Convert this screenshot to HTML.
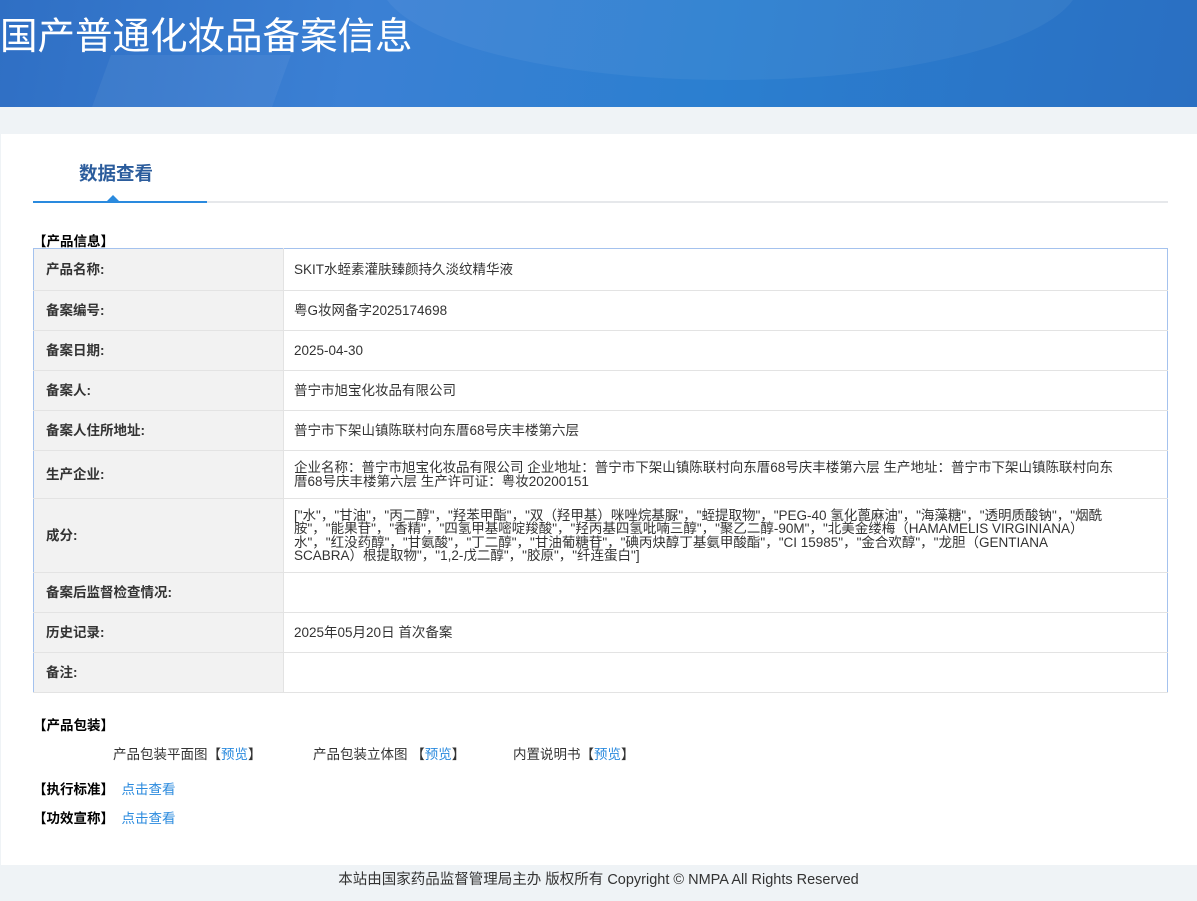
<!DOCTYPE html>
<html><head><meta charset="utf-8"><style>
*{margin:0;padding:0;box-sizing:border-box}
body{width:1197px;height:901px;background:#eff3f6;font-family:"Liberation Sans","Noto Sans CJK SC",sans-serif;color:#333;font-size:13.5px;overflow:hidden;position:relative}
.hd{position:absolute;left:0;top:0;width:1197px;height:107px;background:linear-gradient(100deg,#2f6fc4 0%,#3b80d4 30%,#2b7fd0 60%,#2a6fc2 100%);overflow:hidden}
.hd .c1{position:absolute;left:380px;top:-120px;width:700px;height:200px;border-radius:50%;background:rgba(255,255,255,0.05)}
.hd .c2{position:absolute;left:100px;top:55px;width:180px;height:60px;background:rgba(255,255,255,0.05);transform:skewX(-20deg)}
.hd h1{position:absolute;left:0px;top:8px;font-size:37.5px;font-weight:normal;color:#fff;font-family:"Noto Sans CJK SC",sans-serif;line-height:50px}
.panel{position:absolute;left:1px;top:134px;width:1196px;height:731px;background:#fff}
.tab{position:absolute;left:78px;top:26px;font-size:18.5px;font-weight:bold;color:#2b5c9c;font-family:"Noto Sans CJK SC",sans-serif}
.line{position:absolute;left:32px;top:67px;width:1135px;height:2px;background:#e6e8eb}
.line .b{position:absolute;left:0;top:0;width:174px;height:2px;background:#2a8ade}
.tri{position:absolute;left:106px;top:61px;width:0;height:0;border-left:6px solid transparent;border-right:6px solid transparent;border-bottom:6px solid #2a8ade}
.sec{position:absolute;font-weight:bold;color:#000;font-size:13.5px}
table{position:absolute;left:32px;top:114px;width:1135px;border-collapse:collapse;border:1px solid #a4c2ee}
td{border-bottom:1px solid #e3e3e3;vertical-align:middle;font-size:13.5px;line-height:13.4px}
td.l{width:250px;background:#f2f2f2;font-weight:bold;padding-left:12px;color:#333;border-right:1px solid #e3e3e3}
td.v{padding:0 60px 0 10px}
a{color:#2a8ade;text-decoration:none}
.ft{position:absolute;left:0;top:865px;width:1197px;height:36px;text-align:center;line-height:30px;font-size:14.5px;color:#333}
</style></head><body>
<div class="hd"><div class="c1"></div><div class="c2"></div><h1>国产普通化妆品备案信息</h1></div>
<div class="panel">
<div class="tab">数据查看</div>
<div class="line"><div class="b"></div></div>
<div class="tri"></div>
<div class="sec" style="left:32px;top:96px">【产品信息】</div>
<table>
<tr style="height:42px"><td class="l">产品名称:</td><td class="v">SKIT水蛭素灌肤臻颜持久淡纹精华液</td></tr>
<tr style="height:40px"><td class="l">备案编号:</td><td class="v">粤G妆网备字2025174698</td></tr>
<tr style="height:40px"><td class="l">备案日期:</td><td class="v">2025-04-30</td></tr>
<tr style="height:40px"><td class="l">备案人:</td><td class="v">普宁市旭宝化妆品有限公司</td></tr>
<tr style="height:40px"><td class="l">备案人住所地址:</td><td class="v">普宁市下架山镇陈联村向东厝68号庆丰楼第六层</td></tr>
<tr style="height:48px"><td class="l">生产企业:</td><td class="v" style="padding-right:52px">企业名称：普宁市旭宝化妆品有限公司 企业地址：普宁市下架山镇陈联村向东厝68号庆丰楼第六层 生产地址：普宁市下架山镇陈联村向东厝68号庆丰楼第六层 生产许可证：粤妆20200151</td></tr>
<tr style="height:74px"><td class="l">成分:</td><td class="v">["水"，"甘油"，"丙二醇"，"羟苯甲酯"，"双（羟甲基）咪唑烷基脲"，"蛭提取物"，"PEG-40 氢化蓖麻油"，"海藻糖"，"透明质酸钠"，"烟酰胺"，"能果苷"，"香精"，"四氢甲基嘧啶羧酸"，"羟丙基四氢吡喃三醇"，"聚乙二醇-90M"，"北美金缕梅（HAMAMELIS VIRGINIANA）水"，"红没药醇"，"甘氨酸"，"丁二醇"，"甘油葡糖苷"，"碘丙炔醇丁基氨甲酸酯"，"CI 15985"，"金合欢醇"，"龙胆（GENTIANA SCABRA）根提取物"，"1,2-戊二醇"，"胶原"，"纤连蛋白"]</td></tr>
<tr style="height:40px"><td class="l">备案后监督检查情况:</td><td class="v"></td></tr>
<tr style="height:40px"><td class="l">历史记录:</td><td class="v">2025年05月20日 首次备案</td></tr>
<tr style="height:40px"><td class="l">备注:</td><td class="v"></td></tr>
</table>
<div class="sec" style="left:32px;top:580px">【产品包装】</div>
<div style="position:absolute;left:112px;top:609px">产品包装平面图【<a>预览</a>】</div>
<div style="position:absolute;left:312px;top:609px">产品包装立体图 【<a>预览</a>】</div>
<div style="position:absolute;left:512px;top:609px">内置说明书【<a>预览</a>】</div>
<div style="position:absolute;left:32px;top:644px"><b style="color:#000">【执行标准】</b>&nbsp; <a>点击查看</a></div>
<div style="position:absolute;left:32px;top:673px"><b style="color:#000">【功效宣称】</b>&nbsp; <a>点击查看</a></div>
</div>
<div class="ft">本站由国家药品监督管理局主办 版权所有 Copyright © NMPA All Rights Reserved</div>
</body></html>
